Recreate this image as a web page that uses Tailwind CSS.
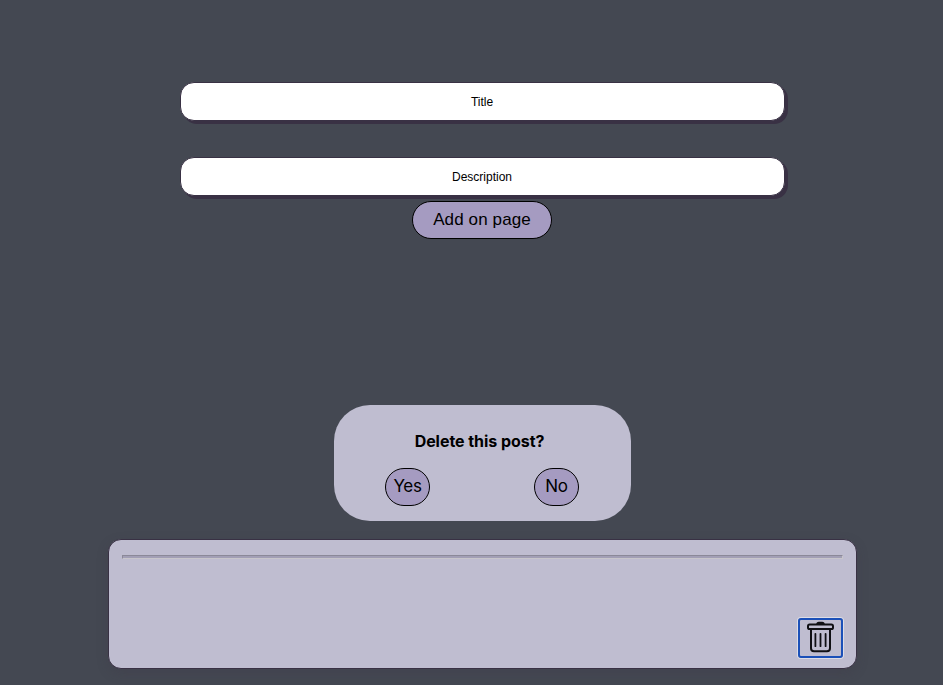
<!DOCTYPE html>
<html lang="en">
<head>
<meta charset="utf-8">
<title>Posts</title>
<script src="https://cdn.jsdelivr.net/npm/@tailwindcss/browser@4"></script>
</head>
<body class="h-[685px] overflow-hidden bg-[#444852] font-['Liberation_Sans',Arial,sans-serif] text-black">
<main class="ml-[108px] flex w-[749px] flex-col items-center pt-[82px]">
  <form class="flex flex-col items-center">
    <input aria-label="Title" placeholder="Title" class="h-[39px] w-[605px] rounded-[14px] border border-[#393144] bg-white pr-[1px] text-center text-[12px] placeholder:text-black shadow-[3px_3px_0_#393144]">
    <input aria-label="Description" placeholder="Description" class="mt-9 h-[39px] w-[605px] rounded-[14px] border border-[#393144] bg-white pr-[1px] text-center text-[12px] placeholder:text-black shadow-[3px_3px_0_#393144]">
    <button type="button" class="mt-[5px] mr-[1px] h-[38px] w-[140px] rounded-[20px] border border-black bg-[#a59bc1] pb-px text-[17px] tracking-[0.12px]">Add on page</button>
  </form>
  <section class="mt-[166px] h-[116px] w-[297px] rounded-[36px] bg-[#bfbdd0] pt-[24px]">
    <h2 class="-translate-x-[3px] text-center font-['Inter',sans-serif] text-[16px] leading-6 font-bold tracking-[-0.05px]">Delete this post?</h2>
    <div class="mt-[15px] flex justify-between px-[51px] pr-[52px] font-['Inter',sans-serif]">
      <button class="h-[38px] w-[45px] rounded-[20px] border border-black bg-[#a59bc1] pb-px text-[17px] tracking-[-0.4px]">Yes</button>
      <button class="h-[38px] w-[45px] rounded-[20px] border border-black bg-[#a59bc1] pb-px text-[17px] tracking-[-0.2px]">No</button>
    </div>
  </section>
  <article class="mt-[18px] flex h-[130px] w-full flex-col rounded-[13px] border border-[#393144] bg-[#bfbdd0] px-[13px] pt-[15px] pb-[10px] shadow-[0_4px_12px_rgba(57,49,68,0.22)]">
    <div class="h-[4px] w-full shrink-0 border-t border-r border-b border-l border-t-[#8b8998] border-l-[#8b8998] border-r-[#c8c6cb] border-b-[#c8c6cb] bg-[#a29fb5]"></div>
    <button aria-label="Delete post" class="mt-auto flex h-[40px] w-[45px] items-center justify-center self-end rounded-[3px] border-2 border-[#1b50b8] shadow-[0_0_0_1px_#dddde6]">
      <svg class="-mt-[2px] mr-[1px] h-[34px] w-[28px]" viewBox="0 0 28 34" fill="none" stroke="#101014" stroke-width="2" stroke-linecap="round" stroke-linejoin="round">
        <rect x="2" y="4.6" width="25" height="4.4" rx="1.6"/>
        <path d="M11.3 3.6Q11.5 2.8 12.7 2.8H16.3Q17.5 2.8 17.7 3.6Z" fill="#101014"/>
        <path d="M5 9V28.3Q5 31.3 8 31.3H21Q24 31.3 24 28.3V9"/>
        <path d="M9.4 13.8V26.2M14.5 13.8V26.2M19.6 13.8V26.2" stroke-width="1.8"/>
      </svg>
    </button>
  </article>
</main>
</body>
</html>
